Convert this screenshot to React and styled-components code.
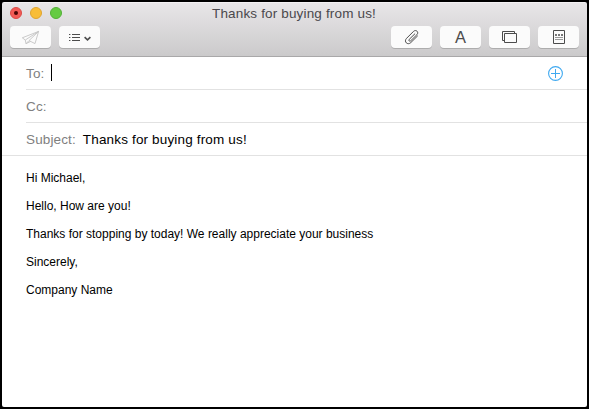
import React from "react";
import styled, { createGlobalStyle } from "styled-components";

const GlobalStyle = createGlobalStyle`
  * { box-sizing: border-box; }
  body { margin: 0; background: #000; }
`;

const Window = styled.main`
  width: 589px;
  height: 409px;
  display: flex;
  flex-direction: column;
  background: #000;
  border: 2px solid #000;
  overflow: hidden;
  font-family: "Liberation Sans", Arial, sans-serif;
  color: #000;
`;

const Chrome = styled.header`
  height: 55px;
  flex: none;
  background: linear-gradient(#e8e6e8, #cbcacb);
  border-top: 1px solid #f3f1f3;
  border-bottom: 1px solid #a9a8a9;
  border-radius: 2px 2px 0 0;
`;

const Compose = styled.section`
  flex: 1;
  display: flex;
  flex-direction: column;
  background: #fff;
  border-radius: 0 0 2px 2px;
`;

const TitleBar = styled.div`
  height: 23px;
  display: grid;
  grid-template-columns: 100px 1fr 100px;
  align-items: start;
`;

const Lights = styled.div`
  display: flex;
  gap: 8px;
  padding: 4px 0 0 8px;
`;

const Light = styled.span`
  width: 12px;
  height: 12px;
  border-radius: 50%;
  display: grid;
  place-items: center;
  background: ${(p) => p.$fill};
  border: 1px solid ${(p) => p.$edge};
`;

const LightDot = styled.span`
  width: 4px;
  height: 4px;
  border-radius: 50%;
  background: #4a0505;
`;

const Title = styled.h1`
  margin: 0;
  padding: 2px 1px 0 0;
  font-size: 13.5px;
  font-weight: 400;
  line-height: 17px;
  letter-spacing: 0.16px;
  text-align: center;
  white-space: nowrap;
  color: #4a484c;
`;

const Toolbar = styled.div`
  display: flex;
  justify-content: space-between;
  padding: 0 8px;
`;

const Group = styled.div`
  display: flex;
  gap: 8px;
`;

const ToolButton = styled.button`
  width: 41px;
  height: 22px;
  padding: 0;
  border: 0;
  border-radius: 4px;
  background: #fbfbfb;
  box-shadow: 0 1px 0 rgba(0, 0, 0, 0.16);
  font: 16.5px/22px "Liberation Sans", Arial, sans-serif;
  color: #4c4c4c;
  svg { display: block; }
`;

const Field = styled.div`
  height: 33px;
  flex: none;
  display: flex;
  align-items: center;
  margin-left: ${(p) => (p.$full ? 0 : 24)}px;
  padding: 0 24px 0 ${(p) => (p.$full ? 24 : 0)}px;
  border-bottom: 1px solid #e2e2e2;
  font-size: 13.5px;
  line-height: 16px;
  letter-spacing: 0.13px;
  white-space: nowrap;
`;

const Label = styled.span`
  padding-top: 2px;
  color: #808080;
`;

const Value = styled.span`
  padding-top: 2px;
  margin-left: 7px;
  letter-spacing: 0.16px;
`;

const Caret = styled.span`
  width: 1px;
  height: 17px;
  margin: -1px 0 0 7px;
  background: #000;
`;

const AddButton = styled.button`
  margin-left: auto;
  padding: 0;
  border: 0;
  background: none;
  svg { display: block; }
`;

const Message = styled.article`
  padding: 15px 24px;
  font-size: 12px;
  line-height: 14px;
`;

const Line = styled.p`
  margin: 0 0 14px;
  white-space: nowrap;
`;

const Icon = ({ children, color = "#4c4c4c", width = 1 }) => (
  <svg width="41" height="22" viewBox="0 0 41 22" fill="none" stroke={color} strokeWidth={width}>
    {children}
  </svg>
);

const SendIcon = () => (
  <Icon color="#c4c4c4" width={0.9}>
    <path d="M28.6 5.4 12.3 11.8l3 2.2L28.6 5.4 19 14.6l6 3 3.6-12.2M15.3 14l.7 3.7 3-3.1M16 17.7l4.6-2.3" strokeLinejoin="round" />
  </Icon>
);

const ListIcon = () => (
  <Icon>
    <path d="M10 8.5h1.4M13 8.5h8M10 11.5h1.4M13 11.5h8M10 14.5h1.4M13 14.5h8" />
    <path d="m25.6 11.2 2.9 2.7 2.9-2.7" strokeWidth="1.6" />
  </Icon>
);

const ClipIcon = () => (
  <Icon>
    <path
      d="M23.8 7.9 18.2 13.4c-1 1.1.4 2.5 1.5 1.4l6.2-6.1c2.4-2.5-.9-5.7-3.4-3.3l-6.9 6.9c-3.3 3.4 1.1 7.3 4.2 4.3l6.7-6.6"
      strokeLinecap="round"
      strokeLinejoin="round"
      strokeWidth="1"
    />
  </Icon>
);

const PhotosIcon = () => (
  <Icon>
    <path d="M15.5 14.5h-2v-9h12v2" />
    <path d="M15.5 7.5h12v9h-12z" />
  </Icon>
);

const StationeryIcon = () => (
  <Icon>
    <path d="M15.5 4.5h11v13h-11z" />
    <path d="M17 9h2m1 0h2m1 0h2" strokeWidth="2" stroke="#777" />
    <path d="M17 11.5h8M17 13.5h8" stroke="#999" />
  </Icon>
);

export default function App() {
  return (
    <>
      <GlobalStyle />
      <Window>
        <Chrome>
          <TitleBar>
            <Lights>
              <Light $fill="#f25b56" $edge="#dc4a46"><LightDot /></Light>
              <Light $fill="#f8bd37" $edge="#dfa42e" />
              <Light $fill="#65cb43" $edge="#52b036" />
            </Lights>
            <Title>Thanks for buying from us!</Title>
          </TitleBar>
          <Toolbar>
            <Group>
              <ToolButton aria-label="Send"><SendIcon /></ToolButton>
              <ToolButton aria-label="Header fields"><ListIcon /></ToolButton>
            </Group>
            <Group>
              <ToolButton aria-label="Attach"><ClipIcon /></ToolButton>
              <ToolButton aria-label="Format">A</ToolButton>
              <ToolButton aria-label="Photos"><PhotosIcon /></ToolButton>
              <ToolButton aria-label="Stationery"><StationeryIcon /></ToolButton>
            </Group>
          </Toolbar>
        </Chrome>
        <Compose>
          <Field>
            <Label>To:</Label>
            <Caret />
            <AddButton aria-label="Add recipient">
              <svg width="15" height="15" viewBox="0 0 15 15" fill="none" stroke="#3fa9f0">
                <circle cx="7.5" cy="7.5" r="6.9" strokeWidth="1.1" />
                <path d="M7.5 3v9M3 7.5h9" />
              </svg>
            </AddButton>
          </Field>
          <Field>
            <Label>Cc:</Label>
          </Field>
          <Field $full>
            <Label>Subject:</Label>
            <Value>Thanks for buying from us!</Value>
          </Field>
          <Message>
            <Line>Hi Michael,</Line>
            <Line>Hello, How are you!</Line>
            <Line>Thanks for stopping by today! We really appreciate your business</Line>
            <Line>Sincerely,</Line>
            <Line>Company Name</Line>
          </Message>
        </Compose>
      </Window>
    </>
  );
}
